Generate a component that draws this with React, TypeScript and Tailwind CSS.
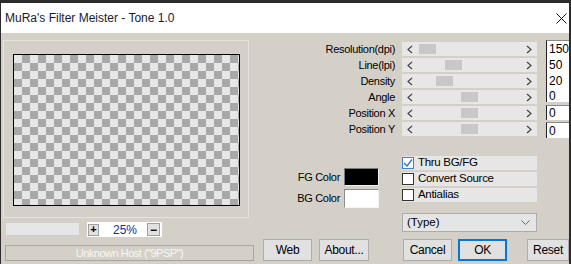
import React from 'react';

const sliders = [
    { label: 'Resolution(dpi)', pos: 17 },
    { label: 'Line(lpi)', pos: 43 },
    { label: 'Density', pos: 34 },
    { label: 'Angle', pos: 59 },
    { label: 'Position X', pos: 59 },
    { label: 'Position Y', pos: 59 },
];

const checks = [
    { label: 'Thru BG/FG', checked: true },
    { label: 'Convert Source', checked: false },
    { label: 'Antialias', checked: false },
];

const Chevron = ({ dir }: { dir: 'left' | 'right' }) => (
    <svg width="6" height="9" viewBox="0 0 6 9" className="shrink-0">
        <polyline
            points={dir === 'left' ? '5,1 1,4.5 5,8' : '1,1 5,4.5 1,8'}
            fill="none"
            stroke="#444"
            strokeWidth="1.2"
        />
    </svg>
);

const SliderTrack = ({ pos }: { pos: number }) => (
    <div className="relative h-[14px] my-[1px] w-[135px] bg-[#e7e7e7] flex items-center justify-between px-[5px]">
        <Chevron dir="left" />
        <div className="absolute top-[2px] h-[10px] w-[17px] bg-[#c8c8c8]" style={{ left: pos }} />
        <Chevron dir="right" />
    </div>
);

const Button = ({ label, w, primary }: { label: string; w: string; primary?: boolean }) => (
    <button
        className={`${w} h-[22px] bg-[#e1e1e1] text-[12px] tracking-[-0.3px] text-black flex items-center justify-center ${
            primary ? 'border-2 border-[#0078d7]' : 'border border-[#adadad]'
        }`}
    >
        {label}
    </button>
);

export default function App() {
    return (
        <div
            className="w-[571px] h-[264px] flex flex-col overflow-hidden bg-[#d4d0c8] border-l border-r-2 border-[#2b2b2b] text-[11px] text-black"
            style={{ fontFamily: '"Liberation Sans", Arial, sans-serif' }}
        >
            {/* title bar */}
            <div className="h-[33px] shrink-0 border-t-[3px] border-[#2b2b2b] bg-white flex items-center justify-between pl-[4px] pr-[2px]">
                <span className="text-[12px] text-[#1a1a2e]">MuRa's Filter Meister - Tone 1.0</span>
                <svg width="11" height="11" viewBox="0 0 11 11">
                    <path d="M0.5 0.5 L10.5 10.5 M10.5 0.5 L0.5 10.5" stroke="#111" strokeWidth="1" />
                </svg>
            </div>

            {/* main area */}
            <div className="h-[206px] shrink-0 flex">
                {/* preview column */}
                <div className="w-[252px] shrink-0 pl-[2px] flex flex-col">
                    <div className="mt-[7px] h-[178px] w-[246px] border border-[#e6e3dd] flex justify-center pt-[13px]">
                        <div className="w-[227px] h-[152px] border border-black bg-[conic-gradient(#a8a8a8_25%,#e6e6e6_0_50%,#a8a8a8_0_75%,#e6e6e6_0)] bg-[length:16px_16px]" />
                    </div>
                    <div className="mt-[4px] flex items-start pl-[2px]">
                        <div className="w-[75px] h-[14px] bg-[#e6e6e6] border border-[#cfcfcf]" />
                        <div className="ml-[7px] w-[75px] h-[15px] bg-white flex items-center justify-between pl-[1px] pr-[2px]">
                            <div className="w-[11px] h-[12px] bg-[#e1e1e1] border border-[#a0a0a0] flex items-center justify-center text-[11px] font-bold leading-none">+</div>
                            <span className="text-[12px] text-[#1e2a8c] pl-[4px]">25%</span>
                            <div className="w-[13px] h-[13px] bg-[#e1e1e1] border border-[#a0a0a0] flex items-center justify-center text-[12px] font-bold leading-none">−</div>
                        </div>
                    </div>
                </div>

                {/* controls column */}
                <div className="flex-1 flex flex-col">
                    <div className="flex items-start">
                        <div className="w-[142px] mt-[8px] flex flex-col items-end tracking-[-0.3px]">
                            {sliders.map((s) => (
                                <div key={s.label} className="h-[16px] flex items-center leading-none">{s.label}</div>
                            ))}
                        </div>
                        <div className="ml-[7px] mt-[8px] flex flex-col">
                            {sliders.map((s) => (
                                <SliderTrack key={s.label} pos={s.pos} />
                            ))}
                        </div>
                        <div className="ml-[9px] mt-[7px] flex-1 flex flex-col text-[12px]">
                            <div className="h-[62px] bg-white border-l border-t border-l-[#222] border-t-[#888] pl-[2px] leading-[16px]">
                                <div>150</div>
                                <div>50</div>
                                <div>20</div>
                                <div className="-mt-[1px]">0</div>
                            </div>
                            <div className="mt-[3px] h-[15px] bg-white border-l border-t border-l-[#222] border-t-[#888] pl-[2px] leading-[14px]">0</div>
                            <div className="mt-[2px] h-[16px] bg-white border-l border-t border-l-[#222] border-t-[#888] pl-[2px] leading-[16px]">0</div>
                        </div>
                    </div>

                    <div className="flex items-start">
                        <div className="w-[126px] pt-[30px] flex flex-col items-end gap-[3px] tracking-[-0.3px]">
                            <div className="flex items-center gap-[4px]">
                                <span>FG Color</span>
                                <div className="w-[35px] h-[18px] bg-black border border-t-[#7a7a7a] border-l-[#7a7a7a] border-b-[#eeeeee] border-r-[#eeeeee]" />
                            </div>
                            <div className="flex items-center gap-[4px]">
                                <span>BG Color</span>
                                <div className="w-[35px] h-[19px] bg-white border border-t-[#8a8a8a] border-l-[#8a8a8a] border-b-[#f4f4f4] border-r-[#f4f4f4]" />
                            </div>
                        </div>
                        <div className="ml-[23px] w-[135px] pt-[18px] flex flex-col">
                            <div className="flex flex-col gap-[2px]">
                                {checks.map((c) => (
                                    <div key={c.label} className="h-[14px] bg-[#e6e6e6] flex items-center text-[11.5px] tracking-[-0.3px]">
                                        <div
                                            className={`w-[12px] h-[12px] bg-white border flex items-center justify-center shrink-0 ${
                                                c.checked ? 'border-[#3b82d6]' : 'border-[#333]'
                                            }`}
                                        >
                                            {c.checked && (
                                                <svg width="10" height="10" viewBox="0 0 10 10">
                                                    <polyline points="1,5 4,8 9,1.5" fill="none" stroke="#2f6fd0" strokeWidth="1.3" />
                                                </svg>
                                            )}
                                        </div>
                                        <span className="ml-[4px] leading-none">{c.label}</span>
                                    </div>
                                ))}
                            </div>
                            <div className="mt-[11px] h-[19px] bg-[#e5e5e5] border border-[#acacac] flex items-center justify-between pl-[4px] pr-[6px] text-[11.5px]">
                                <span>(Type)</span>
                                <svg width="9" height="5" viewBox="0 0 9 5">
                                    <polyline points="0.5,0.5 4.5,4.5 8.5,0.5" fill="none" stroke="#666" strokeWidth="1" />
                                </svg>
                            </div>
                        </div>
                    </div>
                </div>
            </div>

            {/* bottom row */}
            <div className="flex items-start">
                <div className="ml-[4px] mt-[6px] w-[249px] h-[16px] border border-[#a9a69f] flex items-center justify-center text-[#f6f6f6] tracking-[-0.5px]">
                    Unknown Host ("9PSP")
                </div>
                <div className="ml-[9px] flex">
                    <Button label="Web" w="w-[49px]" />
                    <div className="ml-[7px]"><Button label="About..." w="w-[50px]" /></div>
                    <div className="ml-[34px]"><Button label="Cancel" w="w-[49px]" /></div>
                    <div className="ml-[6px]"><Button label="OK" w="w-[49px]" primary /></div>
                    <div className="ml-[20px]"><Button label="Reset" w="w-[42px]" /></div>
                </div>
            </div>
        </div>
    );
}
